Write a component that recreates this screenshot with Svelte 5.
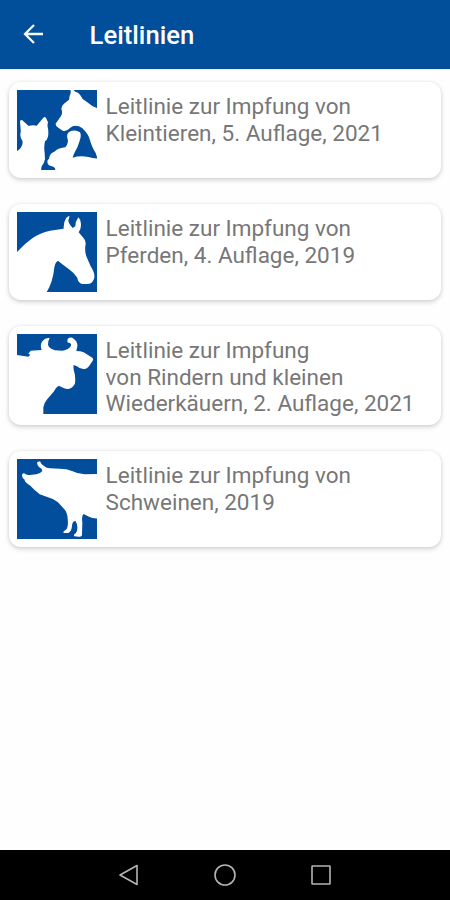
<script>
  const guidelines = [
    {
      lines: ['Leitlinie zur Impfung von', 'Kleintieren, 5. Auflage, 2021'],
      height: 96,
      top: 18,
      art: [
        'M20 202 Q32 198 37 184 Q40 178 38 170 Q31 160 32 150 Q34 143 33 136 L31 113 Q32 105 38 109 L57 126 Q69 122 81 125 L101 101 Q106 96 109 102 Q112 108 115 115 Q112 124 115 133 Q117 145 115 158 Q112 168 106 172 Q102 188 105 207 L106 225 Q104 238 96 247 L95 262 L20 262 Z',
        'M181 16 Q186 24 180 35 L178 47 L163 59 Q153 68 156 78 Q159 87 154 96 L138 119 Q137 127 147 132 L159 140 Q172 143 181 132 Q190 124 202 126 Q214 127 223 138 Q236 150 241 169 Q248 193 258 207 L263 222 L265 222 L265 73 L249 67 L233 55 L219 45 Q210 26 197 23 L189 16 Z',
        'M172 156 Q173 143 187 140 Q200 137 211 145 Q216 154 210 170 Q205 188 196 203 Q191 212 189 221 Q211 214 236 219 Q250 223 265 224 L265 262 L136 262 L136 253 Q128 247 118 244 Q111 237 114 229 L118 224 Q120 208 134 203 Q148 191 167 190 Q173 185 175 172 Z'
      ],
      base: 'M95 258 L96 250 Q100 245 107 242 Q114 248 123 247 Q134 248 137 255 L136 258 Z'
    },
    {
      lines: ['Leitlinie zur Impfung von', 'Pferden, 4. Auflage, 2019'],
      height: 96,
      top: 18,
      art: [
        'M20 140 Q45 113 68 97 Q91 80 121 74 L162 68 Q161 48 170 35 L179 29 Q180 33 176 43 Q176 53 189 66 L197 61 Q197 46 206 34 Q213 40 214 54 Q215 66 207 79 L221 95 Q231 105 227 120 Q225 136 230 151 L243 181 Q256 201 254 215 Q250 232 235 234 L218 234 Q204 230 203 215 Q193 200 180 191 L156 173 L145 164 Q137 168 134 184 Q130 229 110 260 L20 260 Z'
      ],
      base: ''
    },
    {
      lines: ['Leitlinie zur Impfung', 'von Rindern und kleinen', 'Wiederkäuern, 2. Auflage, 2021'],
      height: 99,
      top: 18,
      art: [
        'M20 81 L56 86 L62 80 L56 77 L63 68 L96 66 Q90 50 98 40 Q106 29 120 30 Q115 37 115 51 Q119 62 136 67 L158 68 Q178 65 184 53 Q186 46 173 43 L174 33 Q182 25 192 32 Q205 42 203 55 L200 69 Q212 69 222 73 L249 90 Q252 95 248 100 L241 110 Q234 122 224 123 Q211 124 202 115 L192 111 Q190 120 194 133 Q198 145 196 166 Q191 180 176 183 Q167 184 157 178 L147 173 Q138 178 132 191 L113 213 Q103 225 101 238 L101 260 L20 260 Z'
      ],
      base: ''
    },
    {
      lines: ['Leitlinie zur Impfung von', 'Schweinen, 2019'],
      height: 96,
      top: 21,
      art: [
        'M37 68 Q42 61 47 66 Q52 70 60 69 L80 67 Q93 64 98 57 Q98 50 88 45 Q81 39 83 30 L91 28 Q94 38 104 43 Q110 49 121 49 L150 50 Q171 50 187 57 Q205 66 225 67 L265 66 L265 199 Q249 200 238 194 L222 186 Q215 191 218 211 L217 250 Q216 255 208 254 L194 253 Q190 248 198 244 Q204 240 203 225 Q202 213 197 206 Q187 209 187 222 Q185 239 176 243 L162 243 Q159 238 168 234 Q177 227 174 200 Q173 182 164 172 L145 151 Q130 139 113 135 L90 127 Q76 116 62 101 Q44 90 45 83 Q36 78 37 68 Z'
      ],
      base: ''
    }
  ];
</script>

<div class="screen">
  <header>
    <svg class="back" viewBox="0 0 24 24" aria-label="Zurück">
      <path d="M22 12H4M13 3L4 12l9 9" />
    </svg>
    <h1>Leitlinien</h1>
  </header>

  <main>
    {#each guidelines as item}
      <article class="card" style="height: {item.height}px">
        <svg class="art" viewBox="22 {item.top} 240 240">
          <rect x="22" y={item.top} width="240" height="240" fill="#034d9d" />
          {#each item.art as d}
            <path {d} fill="#fff" />
          {/each}
          {#if item.base}
            <path d={item.base} fill="#034d9d" />
          {/if}
        </svg>
        <p>
          {#each item.lines as line}
            <span>{line}</span>
          {/each}
        </p>
      </article>
    {/each}
  </main>

  <nav>
    <svg viewBox="0 0 24 24"><path d="M20 2.5V21.5L3 12Z" /></svg>
    <svg viewBox="0 0 24 24"><circle cx="12" cy="12" r="10" /></svg>
    <svg viewBox="0 0 24 24"><rect x="3" y="3" width="18" height="18" rx="0.5" /></svg>
  </nav>
</div>

<style>
  :global(body) {
    margin: 0;
    background: #fff;
  }
  .screen {
    width: 450px;
    height: 900px;
    display: flex;
    flex-direction: column;
    overflow: hidden;
    background: #fefefe;
    font-family: Roboto, sans-serif;
  }
  header {
    height: 70px;
    flex: none;
    display: flex;
    align-items: center;
    background: #014e9a;
    color: #fff;
    box-sizing: border-box;
    padding-left: 21px;
    border-bottom: 1px solid #dcecf9;
  }
  .back {
    width: 24px;
    height: 24px;
    margin-bottom: 2px;
    fill: none;
    stroke: #f4f8fc;
    stroke-width: 2.3;
  }
  h1 {
    margin: 1px 0 0 44.6px;
    font-size: 25.7px;
    line-height: 28px;
    font-weight: 500;
  }
  main {
    flex: 1;
    display: flex;
    flex-direction: column;
    gap: 26px;
    padding: 12px 9px 0;
  }
  .card {
    flex: none;
    box-sizing: border-box;
    display: flex;
    align-items: flex-start;
    gap: 8.2px;
    padding: 8px;
    border-radius: 12px;
    background: #fff;
    box-shadow: 0 2px 5px rgba(0, 0, 0, 0.17), 0 0 4px rgba(0, 0, 0, 0.06);
  }
  .art {
    width: 80px;
    height: 80px;
    flex: none;
    margin-left: 0.4px;
  }
  p {
    margin: 3.4px 0 0;
    font-size: 22.5px;
    line-height: 26.4px;
    color: #777;
    white-space: nowrap;
  }
  p span {
    display: block;
  }
  nav {
    height: 50px;
    flex: none;
    display: flex;
    justify-content: center;
    align-items: center;
    gap: 72px;
    background: #000;
  }
  nav svg {
    width: 24px;
    height: 24px;
    fill: none;
    stroke: #b4b4b4;
    stroke-width: 1.6;
    stroke-linejoin: round;
  }
</style>
